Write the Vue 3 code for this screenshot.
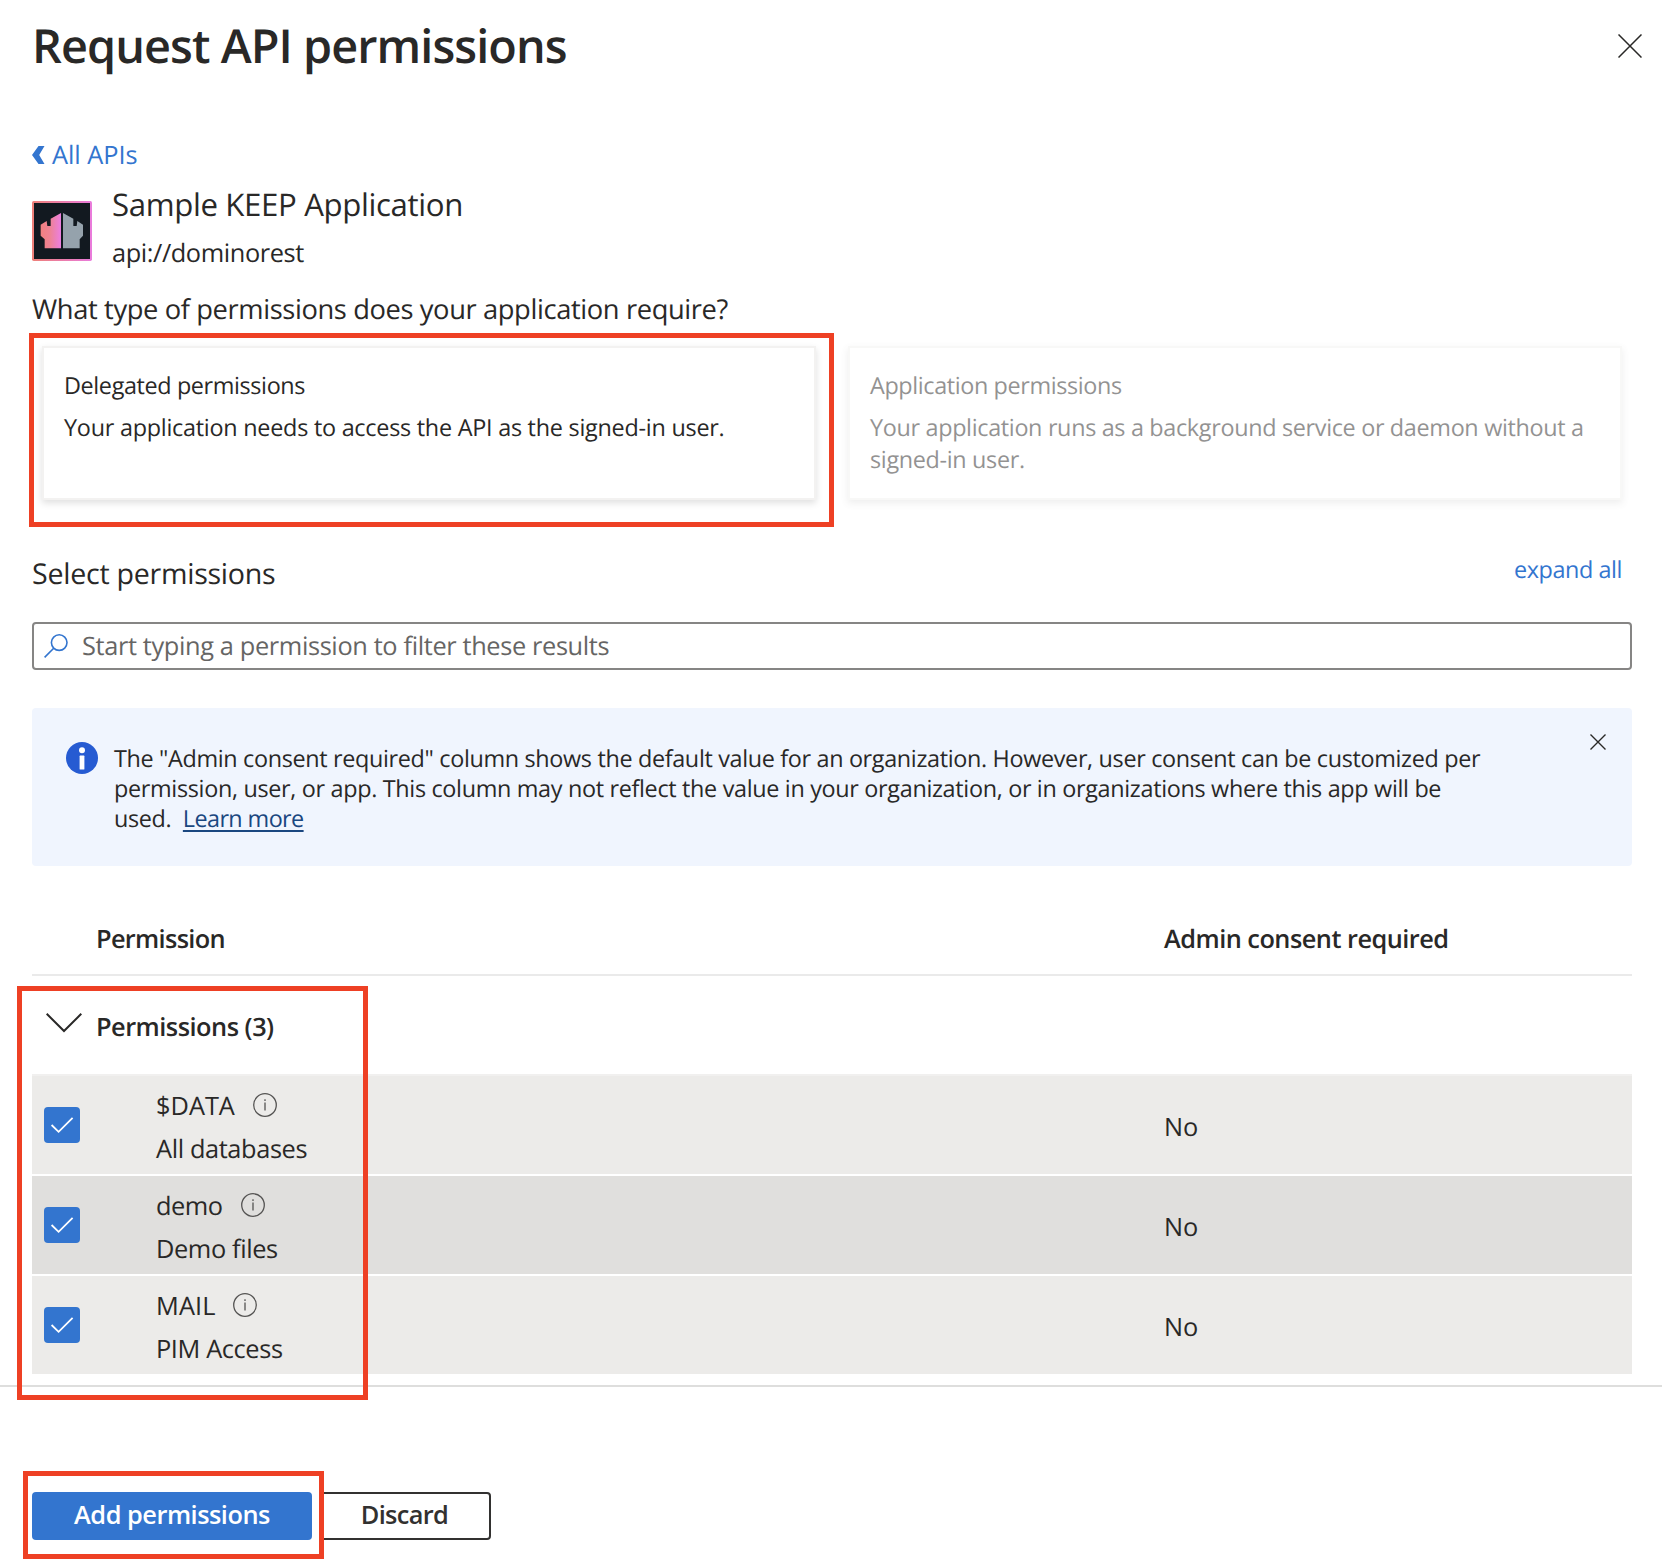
<script setup>
const permissions = [
  { name: '$DATA', description: 'All databases', consent: 'No', gap: 18, track: 0 },
  { name: 'demo', description: 'Demo files', consent: 'No', gap: 18.8, track: -0.45 },
  { name: 'MAIL', description: 'PIM Access', consent: 'No', gap: 17.8, track: 0.1 },
]
</script>

<template>
  <div class="panel">
    <header class="header">
      <h1>Request API permissions</h1>
      <svg class="close" width="24" height="24" viewBox="0 0 24 24"><path d="M0.5 0.5l23 23M23.5 0.5l-23 23" /></svg>
    </header>

    <main>
      <a class="back">
        <svg width="13" height="18" viewBox="0 0 13 18"><path d="M6.5 0h6L7.2 9l5.3 9h-6L0 9z" fill="currentColor" /></svg>
        <span>All APIs</span>
      </a>

      <section class="app">
        <svg class="logo" width="60" height="60" viewBox="0 0 180 180">
          <defs>
            <linearGradient id="frame" x1="0" x2="1"><stop offset="0" stop-color="#ee8078" /><stop offset="1" stop-color="#e97bdc" /></linearGradient>
            <linearGradient id="tower" x1="0" x2="1"><stop offset="0" stop-color="#f08080" /><stop offset=".45" stop-color="#ee8294" /><stop offset="1" stop-color="#ec7fe0" /></linearGradient>
          </defs>
          <rect width="180" height="180" rx="5" fill="url(#frame)" />
          <rect x="6" y="6" width="168" height="168" fill="#121920" />
          <path d="M26 71L44 60 46 75H56V53L87 36V142H38V115L26 104z" fill="url(#tower)" />
          <path d="M93 36L124 53V75H134L136 60 153 71V104L143 115V142H93z" fill="#95a2ac" />
        </svg>
        <div>
          <div class="app-name">Sample KEEP Application</div>
          <div class="app-uri">api://dominorest</div>
        </div>
      </section>

      <h2 class="question">What type of permissions does your application require?</h2>
      <div class="cards">
        <div class="card">
          <div class="card-title">Delegated permissions</div>
          <p class="needs">Your application needs to access the API as the signed-in user.</p>
        </div>
        <div class="card muted">
          <div class="card-title">Application permissions</div>
          <p>Your application runs as a background service or daemon without a<br />signed-in user.</p>
        </div>
      </div>

      <div class="select-row">
        <h2>Select permissions</h2>
        <a>expand all</a>
      </div>

      <div class="search">
        <svg width="24" height="24" viewBox="0 0 24 24"><circle cx="15.2" cy="8.6" r="7.8" /><path d="M9.7 14.3L.6 23.4" /></svg>
        <span>Start typing a permission to filter these results</span>
      </div>

      <div class="notice">
        <svg class="notice-icon" width="32" height="32" viewBox="0 0 32 32">
          <circle cx="16" cy="16" r="16" fill="#265bd2" />
          <circle cx="16" cy="8.3" r="3" fill="#fff" /><rect x="13.6" y="13.6" width="4.8" height="14" rx=".6" fill="#fff" />
        </svg>
        <p>The "Admin consent required" column shows the default value for an organization. However, user consent can be customized per<br /><span class="second">permission, user, or app. This column may not reflect the value in your organization, or in organizations where this app will be</span><br />used.&nbsp; <a>Learn more</a></p>
        <svg class="notice-close" width="16" height="16" viewBox="0 0 16 16"><path d="M.5 .5l15 15M15.5 .5l-15 15" /></svg>
      </div>

      <div class="table-head">
        <span class="col-name">Permission</span>
        <span class="col-consent">Admin consent required</span>
      </div>
      <div class="group">
        <svg width="36" height="20" viewBox="0 0 36 20"><path d="M.7 .8L18 18 35.3 .8" /></svg>
        <span>Permissions (3)</span>
      </div>
      <div v-for="p in permissions" :key="p.name" class="row">
        <div class="checkbox">
          <svg width="36" height="36" viewBox="0 0 36 36"><path d="M7.6 18L14.6 24.8 28.6 10.8" /></svg>
        </div>
        <div class="cell">
          <div class="name" :style="{ gap: p.gap + 'px', letterSpacing: p.track + 'px' }">
            <span>{{ p.name }}</span>
            <svg width="24" height="24" viewBox="0 0 24 24">
              <circle cx="12" cy="12" r="11.3" /><path d="M12 9.6V17.6M12 6.2V8" />
            </svg>
          </div>
          <div class="description">{{ p.description }}</div>
        </div>
        <div class="consent">{{ p.consent }}</div>
      </div>
    </main>

    <footer>
      <button class="primary">Add permissions</button>
      <button class="secondary">Discard</button>
    </footer>

    <div class="mark mark-card"></div>
    <div class="mark mark-rows"></div>
    <div class="mark mark-button"></div>
  </div>
</template>

<style>
body { margin: 0; background: #fff; }
</style>

<style scoped>
* { box-sizing: border-box; }
.panel {
  position: relative;
  width: 1662px;
  height: 1560px;
  overflow: hidden;
  background: #fff;
  color: #292827;
  font-family: "Open Sans", "Noto Sans", sans-serif;
  font-size: 25.35px;
  text-rendering: geometricPrecision;
  white-space: nowrap;
}
svg { display: block; flex: none; }
h1, h2, p { margin: 0; font-weight: 400; }
.header { display: flex; justify-content: space-between; align-items: center; height: 88px; padding: 0 20px 0 32px; }
h1 { font-size: 46.8px; font-weight: 600; line-height: 66px; letter-spacing: -0.93px; padding-top: 1px; }
.close { margin-top: 4px; fill: none; stroke: #292827; stroke-width: 1.5; }
main { padding: 48px 30px 0 32px; }

.back { display: flex; align-items: center; gap: 7px; height: 38px; color: #3375cf; letter-spacing: -0.03px; }
.app { display: flex; gap: 20px; height: 88px; margin-top: 8px; }
.logo { margin-top: 19px; }
.app-name { font-size: 31.2px; line-height: 46px; letter-spacing: -0.36px; }
.app-uri { margin-top: 7px; line-height: 36px; letter-spacing: -0.41px; }

.question { margin-top: 19px; height: 38px; font-size: 27.3px; line-height: 40px; letter-spacing: -0.38px; }
.cards { display: flex; gap: 32px; margin: 19px 0 0 10px; }
.card {
  width: 774px;
  height: 154px;
  padding: 21px 20px 0;
  border: 2px solid #f3f2f1;
  box-shadow: 0 3px 7px rgba(0, 0, 0, .13);
  font-size: 23.4px;
  line-height: 32px;
  letter-spacing: -0.38px;
}
.card p { margin-top: 10px; letter-spacing: -0.33px; }
.card p.needs { letter-spacing: -0.25px; }
.card.muted { opacity: .5; }

.select-row { display: flex; justify-content: space-between; margin-top: 52px; padding-right: 10px; height: 41px; }
.select-row h2 { font-size: 28.6px; line-height: 43px; letter-spacing: -0.26px; }
.select-row a { color: #3375cf; font-size: 23.4px; line-height: 35px; letter-spacing: -0.42px; }

.search {
  display: flex;
  align-items: center;
  gap: 14px;
  width: 1600px;
  height: 48px;
  margin-top: 29px;
  padding: 0 0 0 10px;
  border: 2px solid #868584;
  border-radius: 4px;
  color: #666564;
  letter-spacing: -0.36px;
}
.search svg { margin-top: -1px; fill: none; stroke: #3375cf; stroke-width: 1.6; }

.notice {
  display: flex;
  width: 1600px;
  height: 158px;
  margin-top: 38px;
  padding: 34px 26px 0 34px;
  border-radius: 4px;
  background: #f0f5fe;
  font-size: 23.4px;
  line-height: 30px;
  letter-spacing: -0.34px;
}
.notice p { margin: 1px 0 0 16px; }
.notice .second { letter-spacing: -0.325px; }
.notice a { color: #1a4780; letter-spacing: -0.6px; text-decoration: underline; text-decoration-thickness: 2px; text-underline-offset: 3px; text-decoration-skip-ink: none; }
.notice-close { margin: -8px 0 0 auto; fill: none; stroke: #292827; stroke-width: 1.4; }

.table-head {
  display: flex;
  width: 1600px;
  height: 110px;
  padding-top: 55px;
  border-bottom: 2px solid #eaeaea;
  font-weight: 600;
  line-height: 36px;
}
.col-name { width: 1068px; padding-left: 64px; letter-spacing: -0.68px; }
.col-consent { padding-left: 64px; letter-spacing: -0.52px; }
.group { display: flex; height: 98px; padding: 32px 0 0 14px; font-weight: 600; line-height: 38px; letter-spacing: -0.5px; }
.group svg { margin: 5px 14px 0 0; fill: none; stroke: #292827; stroke-width: 2; }

.row {
  display: flex;
  width: 1600px;
  height: 100px;
  padding-left: 12px;
  border-top: 2px solid #fff;
  background: #ecebe9;
}
.row:nth-child(even of .row) { background-color: #e0dfdd; }
.group + .row { border-top-color: #f1f0ef; }
.checkbox { width: 36px; height: 36px; margin-top: 31px; border-radius: 4px; background: #3375cf; }
.checkbox svg { fill: none; stroke: #fff; stroke-width: 1.8; }
.cell { width: 1052px; padding: 10px 0 0 76px; line-height: 40px; letter-spacing: -0.38px; }
.name { display: flex; align-items: center; height: 40px; }
.name svg { margin-top: -2px; fill: none; stroke: #555453; stroke-width: 1.3; }
.description { margin-top: 3px; }
.consent { padding-left: 32px; line-height: 102px; letter-spacing: 0; }

footer { display: flex; gap: 8px; margin-top: 11px; padding: 105px 0 0 32px; border-top: 2px solid #dededd; }
button { height: 48px; padding: 0 0 4px; border-radius: 4px; font: 600 25.35px "Open Sans", "Noto Sans", sans-serif; }
.primary { width: 280px; border: 0; background: #3375cf; color: #fff; letter-spacing: -0.486px; }
.secondary { width: 171px; padding-right: 2px; border: 2px solid #323130; background: #fff; color: #323130; letter-spacing: -0.65px; }

.mark { position: absolute; border: 5px solid #ee4024; }
.mark-card { left: 29px; top: 333px; width: 805px; height: 194px; }
.mark-rows { left: 17px; top: 986px; width: 351px; height: 414px; }
.mark-button { left: 23px; top: 1471px; width: 301px; height: 88px; }
</style>
